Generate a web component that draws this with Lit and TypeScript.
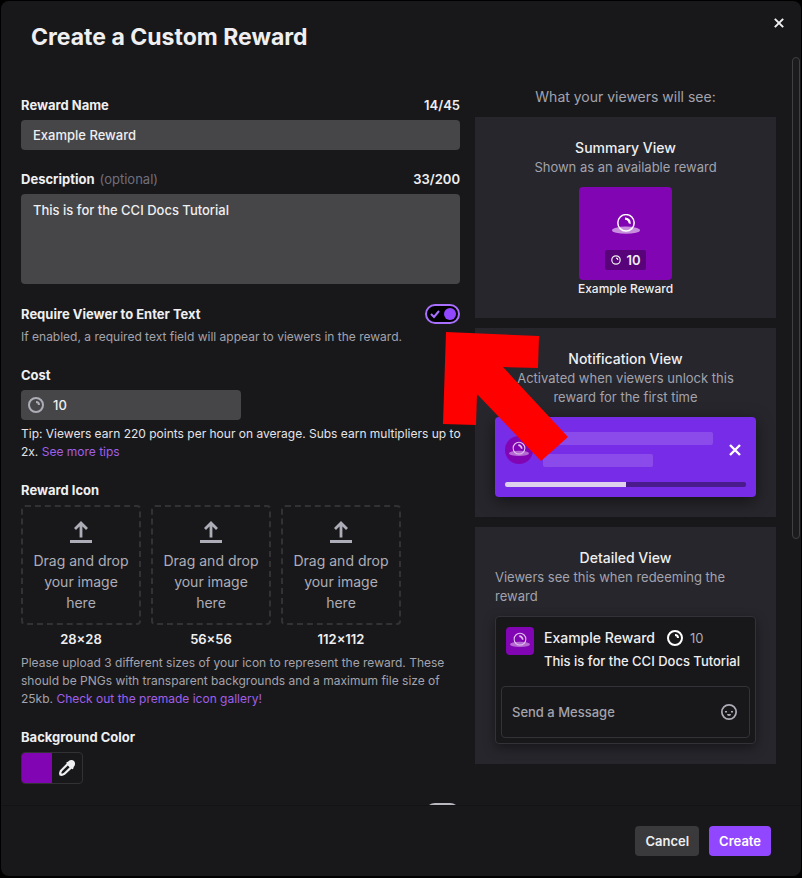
import { LitElement, html, css } from "lit";
import { customElement, state } from "lit/decorators.js";

const coin = html`<svg class="coin" viewBox="0 0 20 20" fill="currentColor" aria-hidden="true">
  <path fill-rule="evenodd" d="M10 18a8 8 0 1 0 0-16 8 8 0 0 0 0 16zm0-2a6 6 0 1 0 0-12 6 6 0 0 0 0 12z"/>
  <path d="M10 6a4 4 0 0 1 4 4h-2a2 2 0 0 0-2-2V6z"/>
</svg>`;

const ball = html`<svg class="ball" viewBox="0 0 28 20" aria-hidden="true">
  <ellipse cx="14" cy="16.2" rx="14" ry="3.6" fill="#fff" opacity=".55"/>
  <circle cx="14" cy="8.8" r="8.2" fill="none" stroke="#fff" stroke-width="1.5"/>
  <path d="M13 3.4a5.800 5.800 0 0 1 5.800 6.600l-2.200-.8a3.800 3.800 0 0 0-3.600-3.400z" fill="#fff"/>
</svg>`;

const cross = html`<svg class="cross" viewBox="0 0 12 12" aria-hidden="true">
  <path d="M1 1l10 10M11 1L1 11" stroke="currentColor" stroke-width="2.4" fill="none"/>
</svg>`;

const upload = html`<svg class="upload" viewBox="0 0 22 22" fill="none" stroke="currentColor" aria-hidden="true">
  <path d="M11 16.500V2M5 8l6-6 6 6" stroke-width="2.800"/>
  <path d="M0 20.500h22" stroke-width="3"/>
</svg>`;

const SIZES = ["28×28", "56×56", "112×112"];

@customElement("app-root")
export class AppRoot extends LitElement {
  @state() private name = "Example Reward";
  @state() private description = "This is for the CCI Docs Tutorial";
  @state() private cost = "10";

  static styles = css`
    :host {
      display: block;
      height: 100vh;
      box-sizing: border-box;
      padding: 1px 1px 2px;
      background: #000;
      color: #efeff1;
      font: 500 13px/20px Inter, "Liberation Sans", sans-serif;
    }
    *, *::before, *::after { box-sizing: border-box; }
    h1, h2, p { margin: 0; }
    button, input, textarea { font: inherit; color: inherit; margin: 0; }
    button { border: 0; cursor: pointer; }
    svg { display: block; flex: none; }
    a { color: #a05fe8; text-decoration: none; }
    .coin { width: 20px; height: 20px; }
    .ball { width: 28px; height: 20px; }
    .modal {
      height: 100%;
      display: flex;
      flex-direction: column;
      background: #18181a;
      border-radius: 8px;
      overflow: hidden;
    }
    .header {
      display: flex;
      justify-content: space-between;
      align-items: flex-start;
      height: 55px;
      flex: none;
      padding: 0 7px 0 30px;
    }
    .title { font-size: 23px; line-height: 28px; font-weight: 700; padding-top: 22px; }
    .close { background: none; padding: 0; width: 30px; height: 30px; margin-top: 7px; display: grid; place-items: center; }
    .close .cross { width: 10px; height: 10px; }
    .body { flex: 1; min-height: 0; display: flex; }
    .scroll {
      flex: 1;
      min-width: 0;
      overflow: hidden auto;
      scrollbar-width: none;
      display: grid;
      grid-template-columns: minmax(0, 1fr) 301px;
      gap: 15px;
      align-items: start;
      padding: 30px 13px 30px 20px;
    }
    .rail { width: 12px; padding: 1px 1px 0 3px; }
    .thumb { height: 64.5%; border: 1px solid #404044; border-radius: 4px; background: #1b1b1d; }
    .form { display: flex; flex-direction: column; gap: 19px; padding-top: 9px; }
    .field { display: flex; flex-direction: column; }
    .row { display: flex; justify-content: space-between; }
    .label { font-weight: 700; }
    .count { font-weight: 600; }
    .optional { font-weight: 400; color: #706f7c; padding-left: 2px; }
    .input {
      width: 100%;
      height: 30px;
      margin-top: 5px;
      padding: 0 12px;
      border: 0;
      border-radius: 4px;
      background: #464648;
      outline: none;
      display: block;
    }
    textarea.input { height: 90px; padding: 6px 12px; resize: none; }
    .require { position: relative; gap: 4px; padding-top: 1px; }
    .toggle { position: relative; width: 35px; height: 20px; flex: none; display: block; color: #a970ff; }
    .toggle input {
      appearance: none;
      display: block;
      width: 100%;
      height: 100%;
      border: 2px solid #b9b9bf;
      border-radius: 10px;
      background: #000;
    }
    .toggle input:checked { border-color: #a970ff; }
    .toggle input::before {
      content: "";
      display: block;
      width: 12px;
      height: 12px;
      margin: 2px;
      border-radius: 50%;
      background: #b9b9bf;
    }
    .toggle input:checked::before { margin-left: 17px; background: #9147ff; }
    .tick { position: absolute; left: 5px; top: 5px; width: 10px; height: 10px; pointer-events: none; }
    .arrow { position: absolute; right: -109px; top: 29px; width: 126px; height: 130px; z-index: 2; pointer-events: none; }
    .help { font-size: 12px; line-height: 18px; font-weight: 400; color: #a3a3ad; }
    .tip { color: #e4e4e8; margin: 5px -8px 0 0; }
    .cost { position: relative; width: 220px; max-width: 100%; color: #efeff1; }
    .cost .coin { position: absolute; left: 5px; top: 10px; color: #adadb8; }
    .cost .input { padding-left: 32px; }
    .drops { display: flex; gap: 10px; margin: 5px 0; }
    .slot { width: 120px; text-align: center; display: flex; flex-direction: column; gap: 4px; font-weight: 600; }
    .drop {
      height: 120px;
      display: flex;
      flex-direction: column;
      align-items: center;
      gap: 7px;
      padding: 14px 6px 0;
      border: 2px dashed #323235;
      border-radius: 4px;
      background: none;
      color: #adadb8;
      font-size: 14px;
      line-height: 21px;
      font-weight: 400;
    }
    .upload { width: 22px; height: 22px; }
    .picker {
      display: flex;
      width: 62px;
      height: 32px;
      margin-top: 5px;
      border: 1px solid #323235;
      border-radius: 4px;
      overflow: hidden;
      padding: 0;
      background: none;
    }
    .swatch { width: 30px; background: #8205b4; }
    .picker svg { width: 16px; height: 16px; margin: 7px; }
    .preview { display: flex; flex-direction: column; gap: 10px; }
    .heading { text-align: center; font-size: 14px; line-height: 21px; font-weight: 400; color: #a3a3ad; }
    .panel { background: #26262c; padding: 20px; display: flex; flex-direction: column; }
    .name { text-align: center; font-size: 14px; line-height: 21px; font-weight: 500; }
    .sub { text-align: center; line-height: 19px; font-weight: 400; color: #a3a3ad; margin-bottom: 10px; }
    .sub.start { text-align: left; }
    .tile {
      width: 93px;
      height: 93px;
      align-self: center;
      border-radius: 4px;
      background: #8205b4;
      display: flex;
      flex-direction: column;
      justify-content: flex-end;
      align-items: center;
      gap: 16px;
      padding-bottom: 10px;
    }
    .badge { display: flex; align-items: center; gap: 4px; height: 20px; padding: 0 5px; border-radius: 2px; background: #580379; font-weight: 600; }
    .badge .coin { width: 12px; height: 12px; }
    .caption { text-align: center; font-size: 12px; line-height: 18px; }
    .toast {
      height: 80px;
      padding: 15px 10px 10px;
      border-radius: 4px;
      background: #772ce8;
      box-shadow: 0 4px 16px rgba(0, 0, 0, .5);
      display: flex;
      flex-direction: column;
      justify-content: space-between;
    }
    .message { display: flex; align-items: center; gap: 10px; padding-right: 5px; }
    .lines { flex: 1; display: flex; flex-direction: column; gap: 9px; }
    .line { width: 170px; height: 13px; border-radius: 2px; background: #8b4beb; }
    .line.short { width: 110px; }
    .message .cross { width: 12px; height: 12px; color: #fff; }
    .bar { height: 5px; border-radius: 2px; background: #491b8c; overflow: hidden; }
    .fill { height: 100%; background: #ddd1ee; }
    .avatar { width: 28px; height: 28px; flex: none; display: grid; place-items: center; padding-bottom: 2px; background: #8205b4; border-radius: 4px; }
    .avatar.round { border-radius: 50%; }
    .avatar .ball { width: 20px; height: 16px; opacity: .75; }
    .detail {
      border: 1px solid #323237;
      border-radius: 4px;
      background: #18181a;
      box-shadow: 0 4px 12px rgba(0, 0, 0, .4);
      padding: 10px 5px 5px;
    }
    .summary { display: flex; gap: 10px; padding: 0 5px; height: 59px; }
    .text { display: flex; flex-direction: column; gap: 2px; }
    .line-one { display: flex; align-items: center; gap: 10px; font-size: 14px; line-height: 22px; }
    .price { display: flex; align-items: center; gap: 5px; font-size: 13px; line-height: 20px; font-weight: 400; color: #adadb8; }
    .price .coin { color: #fff; }
    .chat { height: 52px; border: 1px solid #323237; border-radius: 4px; display: flex; align-items: center; padding: 0 10px; }
    .chat input { flex: 1; min-width: 0; padding: 0; border: 0; outline: none; background: none; font-size: 13px; }
    .chat input::placeholder { color: #a3a3ad; opacity: 1; }
    .smile { width: 20px; height: 20px; padding: 0; background: none; color: #adadb8; }
    .footer {
      flex: none;
      display: flex;
      justify-content: flex-end;
      gap: 10px;
      padding: 20px 30px;
      border-top: 1px solid #131315;
    }
    .btn { height: 30px; padding: 0 10px; border-radius: 4px; background: #3a3a3d; font-weight: 600; }
    .btn.primary { background: #9147ff; color: #fff; }
  `;

  private toggle(label: string, on: boolean) {
    return html`<span class="toggle">
      <input type="checkbox" aria-label=${label} ?checked=${on} />
      ${on ? html`<svg class="tick" viewBox="0 0 10 10" aria-hidden="true"><path d="M1 5l3 3 5-6" fill="none" stroke="currentColor" stroke-width="2"/></svg>` : ""}
    </span>`;
  }

  render() {
    return html`<section class="modal" role="dialog" aria-labelledby="title">
      <header class="header">
        <h1 class="title" id="title">Create a Custom Reward</h1>
        <button class="close" aria-label="Close">${cross}</button>
      </header>
      <div class="body">
        <div class="scroll">
          <form class="form">
            <div class="field">
              <div class="row"><label class="label" for="name">Reward Name</label><span class="count">${this.name.length}/45</span></div>
              <input class="input" id="name" .value=${this.name} @input=${(e: Event) => (this.name = (e.target as HTMLInputElement).value)} />
            </div>
            <div class="field">
              <div class="row">
                <label class="label" for="desc">Description <span class="optional">(optional)</span></label>
                <span class="count">${this.description.length}/200</span>
              </div>
              <textarea class="input" id="desc" .value=${this.description} @input=${(e: Event) => (this.description = (e.target as HTMLTextAreaElement).value)}></textarea>
            </div>
            <div class="field require">
              <div class="row">
                <span class="label">Require Viewer to Enter Text</span>
                ${this.toggle("Require Viewer to Enter Text", true)}
              </div>
              <p class="help">If enabled, a required text field will appear to viewers in the reward.</p>
              <svg class="arrow" viewBox="0 0 126 130" aria-hidden="true">
                <path d="M3 0l93 4-1 32-35-1 65 70-27 24-64-67-1 31-33-1z" fill="#f00"/>
              </svg>
            </div>
            <div class="field">
              <label class="label" for="cost">Cost</label>
              <div class="cost">
                ${coin}
                <input class="input" id="cost" .value=${this.cost} @input=${(e: Event) => (this.cost = (e.target as HTMLInputElement).value)} />
              </div>
              <p class="help tip">Tip: Viewers earn 220 points per hour on average. Subs earn multipliers up to 2x. <a href="#tips">See more tips</a></p>
            </div>
            <div class="field">
              <span class="label">Reward Icon</span>
              <div class="drops">
                ${SIZES.map((size) => html`<div class="slot">
                  <button type="button" class="drop" aria-label="Upload ${size} icon">${upload}<span>Drag and drop your image here</span></button>
                  <span>${size}</span>
                </div>`)}
              </div>
              <p class="help">Please upload 3 different sizes of your icon to represent the reward. These should be PNGs with transparent backgrounds and a maximum file size of 25kb. <a href="#gallery">Check out the premade icon gallery!</a></p>
            </div>
            <div class="field">
              <span class="label">Background Color</span>
              <button type="button" class="picker" aria-label="Background Color">
                <span class="swatch"></span>
                <svg viewBox="0 0 16 16" fill="#efeff1" aria-hidden="true">
                  <path fill-rule="evenodd" d="M9.2 1.400C11-.2 13.600-.4 15 1s1.400 4-.2 5.800l-.8 2.400-1.600-.4-6.500 6-3 1.200-2.400-.6L0 13.200l.8-2.700 6.900-7-.6-.8zM8.800 5.400L3.200 11l-1 2 .8.8 2-1L10.600 7.200z"/>
                </svg>
              </button>
            </div>
            <div class="row"><span></span>${this.toggle("Skip Reward Requests Queue", false)}</div>
          </form>
          <aside class="preview">
            <p class="heading">What your viewers will see:</p>
            <section class="panel">
              <h2 class="name">Summary View</h2>
              <p class="sub">Shown as an available reward</p>
              <div class="tile">${ball}<span class="badge">${coin}${this.cost}</span></div>
              <p class="caption">${this.name}</p>
            </section>
            <section class="panel">
              <h2 class="name">Notification View</h2>
              <p class="sub">Activated when viewers unlock this reward for the first time</p>
              <div class="toast">
                <div class="message">
                  <span class="avatar round">${ball}</span>
                  <div class="lines"><div class="line"></div><div class="line short"></div></div>
                  ${cross}
                </div>
                <div class="bar"><div class="fill" style="width:50%"></div></div>
              </div>
            </section>
            <section class="panel">
              <h2 class="name">Detailed View</h2>
              <p class="sub start">Viewers see this when redeeming the reward</p>
              <div class="detail">
                <div class="summary">
                  <span class="avatar">${ball}</span>
                  <div class="text">
                    <div class="line-one">${this.name}<span class="price">${coin}${this.cost}</span></div>
                    <p>${this.description}</p>
                  </div>
                </div>
                <div class="chat">
                  <input type="text" placeholder="Send a Message" aria-label="Send a Message" />
                  <button type="button" class="smile" aria-label="Emotes">
                    <svg viewBox="0 0 20 20" fill="currentColor" aria-hidden="true">
                      <path fill-rule="evenodd" d="M10 18a8 8 0 1 0 0-16 8 8 0 0 0 0 16zm0-1.700a6.300 6.300 0 1 0 0-12.600 6.300 6.300 0 0 0 0 12.600z"/>
                      <path d="M6 9h2v1.500H6zM12 9h2v1.500h-2zM8 12h4a2 2 0 0 1-4 0z"/>
                    </svg>
                  </button>
                </div>
              </div>
            </section>
          </aside>
        </div>
        <div class="rail"><div class="thumb"></div></div>
      </div>
      <footer class="footer">
        <button class="btn">Cancel</button>
        <button class="btn primary">Create</button>
      </footer>
    </section>`;
  }
}
